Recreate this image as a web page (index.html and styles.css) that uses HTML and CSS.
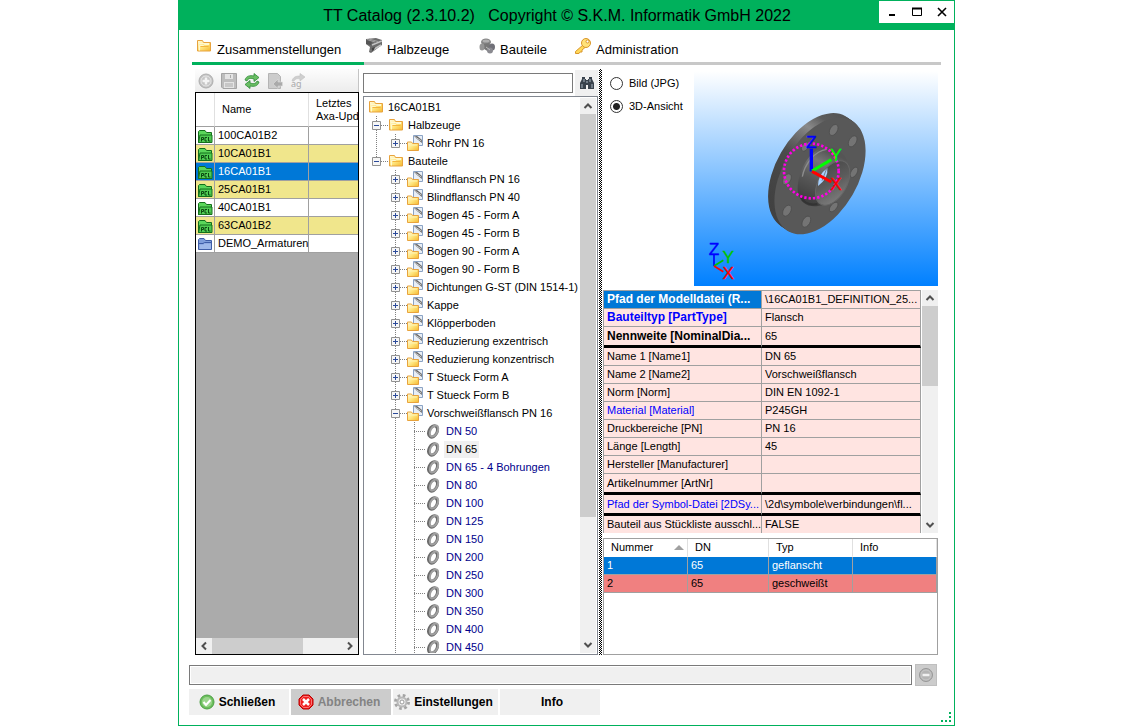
FILE: index.html
```
<!DOCTYPE html>
<html lang="de">
<head>
  <meta charset="UTF-8" />
  <meta name="viewport" content="width=device-width, initial-scale=1.0" />
  <title>TT Catalog</title>
  <link rel="stylesheet" href="styles.css">
</head>
<body>

  <!-- Icons -->
  <svg class="defs" aria-hidden="true">
    <defs>
      <linearGradient id="gold" x1="0" y1="0" x2="1" y2="1">
        <stop offset="0" stop-color="#fffbe0" /><stop offset="0.5" stop-color="#ffe680" /><stop offset="1" stop-color="#f5b82e" />
      </linearGradient>
      <linearGradient id="sky" x1="0" y1="0" x2="0" y2="1">
        <stop offset="0" stop-color="#fff" /><stop offset="1" stop-color="#0080ff" />
      </linearGradient>
      <linearGradient id="rim" x1="0" y1="1" x2="0.6" y2="0">
        <stop offset="0" stop-color="#3a3a3a" /><stop offset="0.4" stop-color="#4c4c4c" /><stop offset="0.62" stop-color="#8a8a8a" /><stop offset="0.75" stop-color="#5c5c5c" /><stop offset="1" stop-color="#505050" />
      </linearGradient>
      <linearGradient id="hub" x1="0" y1="1" x2="0.4" y2="0">
        <stop offset="0" stop-color="#353535" /><stop offset="0.5" stop-color="#585858" /><stop offset="0.8" stop-color="#777" /><stop offset="1" stop-color="#555" />
      </linearGradient>
      <linearGradient id="bore" x1="0" y1="0" x2="1" y2="1">
        <stop offset="0" stop-color="#454545" /><stop offset="0.5" stop-color="#5c5c5c" /><stop offset="1" stop-color="#868686" />
      </linearGradient>
    </defs>
    <symbol id="i-folder" viewBox="0 0 16 16">
      <path d="M1.500 13V2.500h5l1 2h7V13z" fill="url(#gold)" stroke="#e8a33d" />
      <path d="M3 5.500h10M3.500 12.500v-5h4l1-1H13" fill="none" stroke="#fff8d0" />
      <path d="M4.500 8.500h8" stroke="#f3b63f" />
    </symbol>
    <symbol id="i-group" viewBox="0 0 16 16">
      <path d="M6.500 0.500h9v10h-9z" fill="#e8eef6" stroke="#8ba3c4" />
      <path d="M7 1.500l3-.5 5 4v3z" fill="#666" />
      <path d="M8 2l6.500 4" stroke="#ccc" />
      <path d="M.5 15.500V7h4l1 1.500h6v7z" fill="url(#gold)" stroke="#e8a33d" />
      <path d="M2 10h8" stroke="#fff3b0" />
    </symbol>
    <symbol id="i-ring" viewBox="0 0 16 16">
      <ellipse cx="7" cy="8.500" rx="4" ry="6" transform="rotate(28 7 8.500)" fill="none" stroke="#6c6c6c" stroke-width="3" />
      <ellipse cx="8" cy="8" rx="3.500" ry="6" transform="rotate(28 8 8)" fill="none" stroke="#a0a0a0" stroke-width="2" />
    </symbol>
    <symbol id="i-pcl" viewBox="0 0 16 16">
      <path d="M1.500 14.500v-11l1-1H8l1.500 2h5v10z" fill="#5ad65a" stroke="#14701c" />
      <path d="M1.500 14.500l1.500-7.500h12v7.500z" fill="#4fcb52" stroke="#14701c" />
      <path d="M4.500 13.500v-4h2v2h-2M10 9.500H8v3.500h2M11.500 9v4h2" fill="none" stroke="#0c4a12" />
    </symbol>
    <symbol id="i-blue" viewBox="0 0 16 16">
      <path d="M1.500 13.500v-10l1-1H7l1.500 2h6v9z" fill="#7f9ddb" stroke="#3f5da8" />
      <path d="M2 7.500h4l1.500-1H14" fill="none" stroke="#3f5da8" />
      <path d="M2.500 8.500h4l1-1h6.500v5.500h-11.500z" fill="#9fb8ea" />
    </symbol>
    <symbol id="i-profile" viewBox="0 0 16 16">
      <path d="M0 1l10-1 6 2v5L5 15l-2-1 1-5-4-3z" fill="#6c6c6c" />
      <path d="M1 1.500l8 2.500M3 1l9 2.500" stroke="#a0a0a0" />
      <path d="M6 7l10-4M5 13l10-6" stroke="#c4c4c4" stroke-width="1.500" />
      <path d="M0 2l6 2-1 3-5-1z" fill="#555" />
      <path d="M5 14l1-4 3-1-1 3z" fill="#444" />
    </symbol>
    <symbol id="i-parts" viewBox="0 0 16 16">
      <ellipse cx="7" cy="4" rx="5" ry="3.500" fill="#858585" />
      <ellipse cx="7" cy="3" rx="3.500" ry="1.500" fill="#b0b0b0" />
      <path d="M5 6l5-1 3 5-3 4-5-3z" fill="#777" />
      <ellipse cx="3" cy="9" rx="2.500" ry="3.500" fill="#959595" />
      <ellipse cx="13" cy="9" rx="3" ry="3.500" fill="#707078" />
      <ellipse cx="11" cy="12.500" rx="3" ry="3" fill="#8a8a90" />
      <path d="M7 9l4 3" stroke="#bbb" />
    </symbol>
    <symbol id="i-key" viewBox="0 0 16 16">
      <path d="M8 7L.500 13.500v2H4l1-1.500h2V12l3-2.500" fill="#ffd95a" stroke="#d9962a" />
      <circle cx="11" cy="5" r="4.500" fill="#ffe27a" stroke="#d9962a" />
      <circle cx="12.500" cy="3.500" r="1.500" fill="#fff" stroke="#d9962a" />
    </symbol>
    <symbol id="i-add" viewBox="0 0 16 16">
      <circle cx="8" cy="8" r="7" fill="#c4c4c4" stroke="#adadad" />
      <circle cx="8" cy="8" r="5" fill="none" stroke="#e6e6e6" />
      <path d="M8 4.500v7M4.500 8h7" stroke="#f4f4f4" stroke-width="2.500" />
    </symbol>
    <symbol id="i-save" viewBox="0 0 16 16">
      <path d="M.5.5h15v15H2l-1.500-1.500z" fill="#bdbdbd" stroke="#a4a4a4" />
      <path d="M4 1h8v5H4zM3 9h10v6H3z" fill="#e4e4e4" />
      <path d="M4 11h8M4 13h8M9.500 2v3" stroke="#aaa" />
    </symbol>
    <symbol id="i-refresh" viewBox="0 0 16 16">
      <path d="M1 7c1-4 5-5 9-4V0.500l5 4-5 4V6C7 5 4 5 3 8z" fill="#69bd62" stroke="#2f8a39" stroke-width=".8" />
      <path d="M15 9c-1 4-5 5-9 4v2.500l-5-4 5-4V10c3 1 6 1 7-2z" fill="#69bd62" stroke="#2f8a39" stroke-width=".8" />
    </symbol>
    <symbol id="i-import" viewBox="0 0 16 16">
      <path d="M1.500.5h9l3 3v12h-12z" fill="#ccc" stroke="#b4b4b4" />
      <path d="M15.500 9H11V6l-5 5 5 4.500V13h4.500z" fill="#aaa" stroke="#ddd" stroke-width=".6" />
    </symbol>
    <symbol id="i-rename" viewBox="0 0 16 16">
      <path d="M2 8c1-4 4-5 8-5V.500L15 4l-5 4V6C7 5 5 6 4 8z" fill="#cfcfcf" stroke="#c0c0c0" stroke-width=".6" />
      <text x="1" y="14" font-family="Noto Sans" font-size="9" fill="#a8a8a8">ag</text>
    </symbol>
    <symbol id="i-search" viewBox="0 0 16 16">
      <path d="M3 2h3v2h1v1h2V4h1V2h3v2l2 4v6H9v-4H7v4H1V8l2-4z" fill="#39424c" />
      <path d="M3 9v4M5 4v3M11 4v3M13 9v4M8 6v2" stroke="#aab6c2" />
    </symbol>
    <symbol id="i-ok" viewBox="0 0 16 16">
      <circle cx="8" cy="8" r="7" fill="#6cbf5d" stroke="#4da044" />
      <circle cx="8" cy="8" r="5" fill="#9bd58d" />
      <path d="M4.500 8l2.500 3 4.500-5" fill="none" stroke="#fff" stroke-width="2" />
    </symbol>
    <symbol id="i-cancel" viewBox="0 0 16 16">
      <path d="M5 1h6l4 4v6l-4 4H5l-4-4V5z" fill="#f02020" stroke="#b80000" />
      <path d="M5.500 2.500h5l3 3v5l-3 3h-5l-3-3v-5z" fill="none" stroke="#ff9a9a" stroke-width=".7" />
      <path d="M5 5l6 6M11 5l-6 6" stroke="#fff" stroke-width="2.500" />
    </symbol>
    <symbol id="i-gear" viewBox="0 0 16 16">
      <circle cx="8" cy="8" r="6.500" fill="none" stroke="#a4a4a4" stroke-width="3" stroke-dasharray="2.600 2.500" />
      <circle cx="8" cy="8" r="4.500" fill="#ececec" stroke="#b8b8b8" stroke-width="2" />
      <circle cx="8" cy="8" r="2" fill="#fff" stroke="#999" />
    </symbol>
    <symbol id="i-minus" viewBox="0 0 16 16">
      <circle cx="8" cy="8" r="6.500" fill="#b4b4b4" stroke="#989898" />
      <circle cx="8" cy="8" r="5" fill="none" stroke="#c8c8c8" />
      <path d="M4.500 8h7" stroke="#f0f0f0" stroke-width="2.500" />
    </symbol>
    <symbol id="i-plus-box" viewBox="0 0 9 9">
      <path d="M.5.5h8v8h-8z" fill="#f6f6f6" stroke="#919191" />
      <path d="M2 4.500h5M4.500 2v5" stroke="#2b4a9a" />
    </symbol>
    <symbol id="i-minus-box" viewBox="0 0 9 9">
      <path d="M.5.5h8v8h-8z" fill="#f6f6f6" stroke="#919191" />
      <path d="M2 4.500h5" stroke="#2b4a9a" />
    </symbol>
    <symbol id="i-up" viewBox="0 0 16 16"><path d="M4.500 10L8 6.500l3.500 3.500" fill="none" stroke="#505050" stroke-width="2" /></symbol>
    <symbol id="i-down" viewBox="0 0 16 16"><path d="M4.500 6L8 9.500 11.500 6" fill="none" stroke="#505050" stroke-width="2" /></symbol>
    <symbol id="i-left" viewBox="0 0 16 16"><path d="M10 4.500L6.500 8l3.500 3.500" fill="none" stroke="#505050" stroke-width="2" /></symbol>
    <symbol id="i-right" viewBox="0 0 16 16"><path d="M6 4.500L9.500 8 6 11.500" fill="none" stroke="#505050" stroke-width="2" /></symbol>
  </svg>

  <div class="window">
    <header class="titlebar">
      <h1>TT Catalog (2.3.10.2)   Copyright © S.K.M. Informatik GmbH 2022</h1>
      <div class="window-buttons">
        <button aria-label="Minimieren"><svg viewBox="0 0 12 12"><path d="M3 9h6" stroke="#000" stroke-width="2" /></svg></button>
        <button aria-label="Maximieren"><svg viewBox="0 0 12 12"><path d="M1.500 2.500h9v7h-9z" fill="none" stroke="#000" /><path d="M1 2.500h10" stroke="#000" stroke-width="2" /></svg></button>
        <button aria-label="Fenster schließen"><svg viewBox="0 0 12 12"><path d="M2 2l8 8M10 2l-8 8" stroke="#000" stroke-width="1.600" /></svg></button>
      </div>
    </header>

    <nav class="tabs">
      <a href="#" class="tab tab-sets active"><svg class="icon"><use href="#i-folder" /></svg><span>Zusammenstellungen</span></a>
      <a href="#" class="tab tab-profiles"><svg class="icon"><use href="#i-profile" /></svg><span>Halbzeuge</span></a>
      <a href="#" class="tab tab-parts"><svg class="icon"><use href="#i-parts" /></svg><span>Bauteile</span></a>
      <a href="#" class="tab"><svg class="icon"><use href="#i-key" /></svg><span>Administration</span></a>
    </nav>

    <main>
      <section class="sets">
        <div class="toolbar">
          <button aria-label="Neu"><svg class="icon"><use href="#i-add" /></svg></button>
          <button aria-label="Speichern"><svg class="icon"><use href="#i-save" /></svg></button>
          <button aria-label="Aktualisieren"><svg class="icon"><use href="#i-refresh" /></svg></button>
          <button aria-label="Importieren"><svg class="icon"><use href="#i-import" /></svg></button>
          <button aria-label="Umbenennen"><svg class="icon"><use href="#i-rename" /></svg></button>
        </div>
        <div class="sets-box">
          <div class="sets-scroll">
            <table class="sets-table">
              <thead>
                <tr><th class="col-icon"></th><th class="col-name">Name</th><th class="col-update">Letztes<br>Axa-Upda</th></tr>
              </thead>
              <tbody>
                <tr><td><svg class="icon"><use href="#i-pcl" /></svg></td><td>100CA01B2</td><td></td></tr>
                <tr class="alt"><td><svg class="icon"><use href="#i-pcl" /></svg></td><td>10CA01B1</td><td></td></tr>
                <tr class="selected"><td><svg class="icon"><use href="#i-pcl" /></svg></td><td>16CA01B1</td><td></td></tr>
                <tr class="alt"><td><svg class="icon"><use href="#i-pcl" /></svg></td><td>25CA01B1</td><td></td></tr>
                <tr><td><svg class="icon"><use href="#i-pcl" /></svg></td><td>40CA01B1</td><td></td></tr>
                <tr class="alt"><td><svg class="icon"><use href="#i-pcl" /></svg></td><td>63CA01B2</td><td></td></tr>
                <tr><td><svg class="icon"><use href="#i-blue" /></svg></td><td>DEMO_Armaturen</td><td></td></tr>
              </tbody>
            </table>
          </div>
          <div class="scroll scroll-h">
            <button aria-label="Nach links"><svg class="icon"><use href="#i-left" /></svg></button>
            <div class="track"><div class="thumb"></div></div>
            <button aria-label="Nach rechts"><svg class="icon"><use href="#i-right" /></svg></button>
          </div>
        </div>
      </section>

      <section class="browser">
        <div class="search">
          <input type="text" aria-label="Suche" />
          <button aria-label="Suchen"><svg class="icon"><use href="#i-search" /></svg></button>
        </div>
        <div class="tree-box">
          <div class="tree">
            <div class="root"><svg class="icon"><use href="#i-folder" /></svg><span>16CA01B1</span></div>
            <ul class="first">
              <li>
                <div class="node"><button aria-label="Zuklappen"><svg><use href="#i-minus-box" /></svg></button><svg class="icon"><use href="#i-folder" /></svg><span>Halbzeuge</span></div>
                <ul>
                  <li class="end"><div class="node"><button aria-label="Aufklappen"><svg><use href="#i-plus-box" /></svg></button><svg class="icon"><use href="#i-group" /></svg><span>Rohr PN 16</span></div></li>
                </ul>
              </li>
              <li class="end">
                <div class="node"><button aria-label="Zuklappen"><svg><use href="#i-minus-box" /></svg></button><svg class="icon"><use href="#i-folder" /></svg><span>Bauteile</span></div>
                <ul>
                  <li><div class="node"><button aria-label="Aufklappen"><svg><use href="#i-plus-box" /></svg></button><svg class="icon"><use href="#i-group" /></svg><span>Blindflansch PN 16</span></div></li>
                  <li><div class="node"><button aria-label="Aufklappen"><svg><use href="#i-plus-box" /></svg></button><svg class="icon"><use href="#i-group" /></svg><span>Blindflansch PN 40</span></div></li>
                  <li><div class="node"><button aria-label="Aufklappen"><svg><use href="#i-plus-box" /></svg></button><svg class="icon"><use href="#i-group" /></svg><span>Bogen 45 - Form A</span></div></li>
                  <li><div class="node"><button aria-label="Aufklappen"><svg><use href="#i-plus-box" /></svg></button><svg class="icon"><use href="#i-group" /></svg><span>Bogen 45 - Form B</span></div></li>
                  <li><div class="node"><button aria-label="Aufklappen"><svg><use href="#i-plus-box" /></svg></button><svg class="icon"><use href="#i-group" /></svg><span>Bogen 90 - Form A</span></div></li>
                  <li><div class="node"><button aria-label="Aufklappen"><svg><use href="#i-plus-box" /></svg></button><svg class="icon"><use href="#i-group" /></svg><span>Bogen 90 - Form B</span></div></li>
                  <li><div class="node"><button aria-label="Aufklappen"><svg><use href="#i-plus-box" /></svg></button><svg class="icon"><use href="#i-group" /></svg><span>Dichtungen G-ST (DIN 1514-1)</span></div></li>
                  <li><div class="node"><button aria-label="Aufklappen"><svg><use href="#i-plus-box" /></svg></button><svg class="icon"><use href="#i-group" /></svg><span>Kappe</span></div></li>
                  <li><div class="node"><button aria-label="Aufklappen"><svg><use href="#i-plus-box" /></svg></button><svg class="icon"><use href="#i-group" /></svg><span>Klöpperboden</span></div></li>
                  <li><div class="node"><button aria-label="Aufklappen"><svg><use href="#i-plus-box" /></svg></button><svg class="icon"><use href="#i-group" /></svg><span>Reduzierung exzentrisch</span></div></li>
                  <li><div class="node"><button aria-label="Aufklappen"><svg><use href="#i-plus-box" /></svg></button><svg class="icon"><use href="#i-group" /></svg><span>Reduzierung konzentrisch</span></div></li>
                  <li><div class="node"><button aria-label="Aufklappen"><svg><use href="#i-plus-box" /></svg></button><svg class="icon"><use href="#i-group" /></svg><span>T Stueck Form A</span></div></li>
                  <li><div class="node"><button aria-label="Aufklappen"><svg><use href="#i-plus-box" /></svg></button><svg class="icon"><use href="#i-group" /></svg><span>T Stueck Form B</span></div></li>
                  <li>
                    <div class="node"><button aria-label="Zuklappen"><svg><use href="#i-minus-box" /></svg></button><svg class="icon"><use href="#i-group" /></svg><span>Vorschweißflansch PN 16</span></div>
                    <ul class="sizes">
                      <li><div class="node"><svg class="icon"><use href="#i-ring" /></svg><span>DN 50</span></div></li>
                      <li><div class="node current"><svg class="icon"><use href="#i-ring" /></svg><span>DN 65</span></div></li>
                      <li><div class="node"><svg class="icon"><use href="#i-ring" /></svg><span>DN 65 - 4 Bohrungen</span></div></li>
                      <li><div class="node"><svg class="icon"><use href="#i-ring" /></svg><span>DN 80</span></div></li>
                      <li><div class="node"><svg class="icon"><use href="#i-ring" /></svg><span>DN 100</span></div></li>
                      <li><div class="node"><svg class="icon"><use href="#i-ring" /></svg><span>DN 125</span></div></li>
                      <li><div class="node"><svg class="icon"><use href="#i-ring" /></svg><span>DN 150</span></div></li>
                      <li><div class="node"><svg class="icon"><use href="#i-ring" /></svg><span>DN 200</span></div></li>
                      <li><div class="node"><svg class="icon"><use href="#i-ring" /></svg><span>DN 250</span></div></li>
                      <li><div class="node"><svg class="icon"><use href="#i-ring" /></svg><span>DN 300</span></div></li>
                      <li><div class="node"><svg class="icon"><use href="#i-ring" /></svg><span>DN 350</span></div></li>
                      <li><div class="node"><svg class="icon"><use href="#i-ring" /></svg><span>DN 400</span></div></li>
                      <li><div class="node"><svg class="icon"><use href="#i-ring" /></svg><span>DN 450</span></div></li>
                    </ul>
                  </li>
                </ul>
              </li>
            </ul>
          </div>
          <div class="scroll scroll-v tree-scroll">
            <button aria-label="Nach oben"><svg class="icon"><use href="#i-up" /></svg></button>
            <div class="track"><div class="thumb"></div></div>
            <button aria-label="Nach unten"><svg class="icon"><use href="#i-down" /></svg></button>
          </div>
        </div>
      </section>

      <div class="splitter"></div>

      <section class="details">
        <div class="preview">
          <div class="view-mode">
            <label><input type="radio" name="view" />Bild (JPG)</label>
            <label><input type="radio" name="view" checked />3D-Ansicht</label>
          </div>
          <svg class="scene" viewBox="12 3 732 645" preserveAspectRatio="none" role="img" aria-label="3D-Ansicht Flansch">
            <rect x="12" y="3" width="732" height="645" fill="url(#sky)" />
            <!-- flange disc: rim, then face -->
            <g fill="url(#rim)">
              <ellipse cx="371" cy="304" rx="113" ry="191" transform="rotate(30 371 304)" />
              <ellipse cx="376" cy="308" rx="113" ry="191" transform="rotate(30 376 308)" />
              <ellipse cx="381" cy="311" rx="113" ry="191" transform="rotate(30 381 311)" />
              <ellipse cx="386" cy="315" rx="113" ry="191" transform="rotate(30 386 315)" />
            </g>
            <ellipse cx="390" cy="318" rx="113" ry="191" transform="rotate(30 390 318)" fill="#585858" />
            <!-- bolt holes -->
            <g fill="#747474" stroke="#4a4a4a" stroke-width="2">
              <ellipse cx="431" cy="180" rx="11" ry="18" transform="rotate(30 431 180)" />
              <ellipse cx="488" cy="214" rx="11" ry="18" transform="rotate(30 488 214)" />
              <ellipse cx="492" cy="307" rx="9" ry="17" transform="rotate(30 492 307)" />
              <ellipse cx="431" cy="411" rx="9" ry="17" transform="rotate(40 431 411)" />
              <ellipse cx="349" cy="455" rx="11" ry="18" transform="rotate(30 349 455)" />
              <ellipse cx="291" cy="422" rx="11" ry="18" transform="rotate(30 291 422)" />
              <ellipse cx="291" cy="328" rx="11" ry="18" transform="rotate(30 291 328)" />
              <ellipse cx="345" cy="230" rx="9" ry="15" transform="rotate(30 345 230)" />
            </g>
            <!-- welding neck -->
            <path d="M400 232C350 245 318 320 324 368c6 30 28 44 60 40l50-10 42-90-4-35c-14-30-40-50-72-41z" fill="url(#hub)" />
            <path d="M410 238c-35 4-66 44-73 82" fill="none" stroke="#8c8c8c" stroke-width="4" />
            <path d="M332 380c10 20 28 26 50 22" fill="none" stroke="#333" stroke-width="6" />
            <ellipse cx="428" cy="339" rx="42" ry="73" transform="rotate(30 428 339)" fill="url(#bore)" stroke="#666" stroke-width="3" />
            <path d="M412 294q4 30-28 54 0-34 28-54z" fill="#a8d2ff" />
            <path d="M410 296l-14 36" stroke="#555" stroke-width="2" />
            <circle cx="364" cy="303" r="82" fill="none" stroke="#ff00e6" stroke-width="8" stroke-dasharray="7 6" />
            <!-- axes -->
            <path d="M364 304V236" stroke="#00f" stroke-width="10" />
            <path d="M366 303l58-34" stroke="#0f0" stroke-width="9" />
            <path d="M366 304l58 32" stroke="#f00" stroke-width="9" />
            <g font-family="Liberation Sans" font-size="52" text-anchor="middle">
              <text x="364" y="233" fill="#00f" stroke="#00f">Z</text>
              <text x="438" y="274" fill="#0f0" stroke="#0f0">Y</text>
              <text x="438" y="360" fill="#f00" stroke="#f00">X</text>
              <text x="72" y="554" fill="#00f" stroke="#00f">Z</text>
              <text x="115" y="578" fill="#00c400" stroke="#00c400">Y</text>
              <text x="115" y="627" fill="#f00" stroke="#f00">X</text>
            </g>
            <path d="M72 588v-34" stroke="#00f" stroke-width="5" />
            <path d="M72 588l28-17" stroke="#00c400" stroke-width="5" />
            <path d="M72 588l28 17" stroke="#f00" stroke-width="5" />
          </svg>
        </div>

        <div class="props">
          <div class="props-view">
            <table class="props-table">
              <tbody>
                <tr class="key"><th class="selected">Pfad der Modelldatei (R...</th><td>\16CA01B1_DEFINITION_25...</td></tr>
                <tr class="key link"><th>Bauteiltyp [PartType]</th><td>Flansch</td></tr>
                <tr class="key rule"><th>Nennweite [NominalDia...</th><td>65</td></tr>
                <tr><th>Name 1 [Name1]</th><td>DN 65</td></tr>
                <tr><th>Name 2 [Name2]</th><td>Vorschweißflansch</td></tr>
                <tr><th>Norm [Norm]</th><td>DIN EN 1092-1</td></tr>
                <tr class="link"><th>Material [Material]</th><td>P245GH</td></tr>
                <tr><th>Druckbereiche [PN]</th><td>PN 16</td></tr>
                <tr><th>Länge [Length]</th><td>45</td></tr>
                <tr><th>Hersteller [Manufacturer]</th><td></td></tr>
                <tr class="rule"><th>Artikelnummer [ArtNr]</th><td></td></tr>
                <tr class="link rule"><th>Pfad der Symbol-Datei [2DSy...</th><td>\2d\symbole\verbindungen\fl...</td></tr>
                <tr><th>Bauteil aus Stückliste ausschl...</th><td>FALSE</td></tr>
              </tbody>
            </table>
          </div>
          <div class="scroll scroll-v props-scroll">
            <button aria-label="Nach oben"><svg class="icon"><use href="#i-up" /></svg></button>
            <div class="track"><div class="thumb"></div></div>
            <button aria-label="Nach unten"><svg class="icon"><use href="#i-down" /></svg></button>
          </div>
        </div>

        <div class="ports">
          <table class="ports-table">
            <thead>
              <tr><th class="col-number"><div class="sorted">Nummer<svg viewBox="0 0 10 5"><path d="M0 5l5-5 5 5z" fill="#a0a0a0" /></svg></div></th><th class="col-dn">DN</th><th class="col-type">Typ</th><th>Info</th></tr>
            </thead>
            <tbody>
              <tr class="selected"><td>1</td><td>65</td><td>geflanscht</td><td></td></tr>
              <tr class="welded"><td>2</td><td>65</td><td>geschweißt</td><td></td></tr>
            </tbody>
          </table>
        </div>
      </section>
    </main>

    <footer>
      <div class="status">
        <div class="progress"></div>
        <button class="stop" aria-label="Stopp"><svg class="icon"><use href="#i-minus" /></svg></button>
      </div>
      <div class="actions">
        <button><svg class="icon"><use href="#i-ok" /></svg>Schließen</button>
        <button class="cancel"><svg class="icon"><use href="#i-cancel" /></svg>Abbrechen</button>
        <button class="settings"><svg class="icon"><use href="#i-gear" /></svg>Einstellungen</button>
        <button class="info">Info</button>
        <svg class="grip" viewBox="0 0 10 10" aria-hidden="true"><path d="M8 0h2v2H8zM8 4h2v2H8zM8 8h2v2H8zM4 8h2v2H4zM0 8h2v2H0z" fill="#00b15c" /></svg>
      </div>
    </footer>
  </div>

</body>
</html>
```
FILE: styles.css
```
* {
  box-sizing: border-box;
}

body {
  font-family: "Liberation Sans", Arial, sans-serif;
  font-size: 11px;
  line-height: 17px;
  margin: 0;
  padding: 0 179px 0 178px;
  background: #fff;
  color: #000;
}

button {
  font: inherit;
  color: inherit;
  border: none;
  padding: 0;
  background: none;
  cursor: pointer;
}

/* must stay rendered, gradients do not work from display: none */
.defs {
  position: absolute;
  width: 0;
  height: 0;
}

.icon {
  display: block;
  width: 16px;
  height: 16px;
  flex: none;
}

.window {
  display: flex;
  flex-direction: column;
  height: 100vh;
  border: 1px solid #00b15c;
  border-top: none;
}

/* Title bar */
.titlebar {
  display: flex;
  align-items: flex-start;
  height: 30px;
  flex: none;
  background: #00b15c;
}

h1 {
  flex: 1;
  margin: 0;
  padding-left: 56px;
  font-size: 16px;
  font-weight: normal;
  line-height: 31px;
  text-align: center;
  white-space: pre;
}

.window-buttons {
  display: flex;
  margin-top: 1px;
  background: #fff;
}
.window-buttons button {
  width: 25px;
  height: 22px;
  display: flex;
  align-items: center;
  justify-content: center;
}
.window-buttons svg {
  width: 12px;
  height: 12px;
}

/* Tabs */
.tabs {
  display: flex;
  flex: none;
  height: 35px;
  margin: 0 13px;
  border-bottom: 3px solid #c8c8c8;
}
.tab {
  display: flex;
  align-items: flex-start;
  gap: 5px;
  height: 35px;
  padding: 8px 0 0 2px;
  font-size: 13px;
  color: #000;
  text-decoration: none;
}
.tab span {
  padding-top: 3px;
}
.tab-sets {
  width: 172px;
  padding-left: 4px;
}
.tab-profiles {
  width: 113px;
}
.tab-parts {
  width: 96px;
}
.tab.active {
  border-bottom: 3px solid #00b15c;
}

main {
  display: flex;
  flex: 1;
  min-height: 0;
  padding: 4px 16px 0 16px;
}

/* Scroll bars */
.scroll {
  display: flex;
  flex: none;
  background: #f0f0f0;
}
.scroll-v {
  flex-direction: column;
  width: 16px;
}
.scroll-h {
  height: 16px;
}
.scroll .track {
  flex: 1;
}
.scroll .thumb {
  background: #cdcdcd;
}
.scroll-h .thumb {
  width: 70%;
  height: 100%;
}
.tree-scroll .thumb {
  height: 77%;
}
.props-scroll .thumb {
  height: 38%;
}

/* Left: list of sets */
.sets {
  display: flex;
  flex-direction: column;
  width: 164px;
  margin-right: 4px;
}
.toolbar {
  display: flex;
  gap: 7px;
  height: 23px;
  padding: 2px 3px;
  flex: none;
  background: linear-gradient(#fdfdfd, #ececec);
  border-right: 1px solid #c4c4c4;
}
.sets-box {
  display: flex;
  flex-direction: column;
  flex: 1;
  min-height: 0;
  border: 1px solid #000;
}
.sets-scroll {
  flex: 1;
  overflow: hidden;
  background: #ababab;
}
.sets-table {
  width: 186px;
  table-layout: fixed;
  border-collapse: separate;
  border-spacing: 0;
  background: #fff;
}
.sets-table th,
.sets-table td {
  padding: 0;
  border-right: 1px solid #a0a0a0;
  border-bottom: 1px solid #a0a0a0;
  font-weight: normal;
  text-align: left;
  white-space: nowrap;
}
.sets-table th {
  height: 34px;
  padding-left: 7px;
  line-height: 13px;
  border-right-color: #e0e0e0;
}
.sets-table td {
  height: 18px;
  padding-left: 3px;
}
.sets-table td:first-child {
  padding-left: 1px;
}
.sets-table .col-icon {
  width: 19px;
}
.sets-table .col-name {
  width: 94px;
}
.sets-table .alt {
  background: #f0e68c;
}

.selected {
  background: #0078d7;
  color: #fff;
}

/* Middle: search and tree */
.browser {
  display: flex;
  flex-direction: column;
  width: 235px;
}
.search {
  display: flex;
  flex: none;
  align-items: center;
  gap: 2px;
  height: 27px;
}
.search input {
  flex: 1;
  min-width: 0;
  height: 20px;
  padding: 0 3px;
  border: 1px solid #7a7a7a;
  font: inherit;
}
.search button {
  display: flex;
  align-items: center;
  justify-content: center;
  width: 23px;
  height: 26px;
  background: #f0f0f0;
}
.tree-box {
  display: flex;
  flex: 1;
  min-height: 0;
  padding: 1px;
  border: 1px solid #828790;
}
.tree {
  flex: 1;
  overflow: hidden;
}
.tree ul {
  list-style: none;
  margin: 0 0 0 19px;
  padding: 0;
}
.tree .first {
  margin-left: 11px;
}
/* dotted guide down the left edge of each branch */
.tree li {
  background: repeating-linear-gradient(#808080 0 1px, transparent 1px 2px) 0 0 / 1px 100% no-repeat;
}
.tree li.end {
  background-size: 1px 9px;
}
.root,
.node {
  display: flex;
  align-items: center;
  height: 18px;
  white-space: nowrap;
}
.root {
  padding-left: 3px;
}
.node::before {
  content: "";
  order: 1;
  width: 7px;
  height: 1px;
  background: repeating-linear-gradient(90deg, #808080 0 1px, transparent 1px 2px);
}
.node .icon,
.node span {
  order: 2;
}
.root span,
.node span {
  padding: 0 2px;
  margin-left: 2px;
}
.node button {
  width: 9px;
  height: 9px;
  margin-left: -4px;
}
.node button svg {
  display: block;
  width: 9px;
  height: 9px;
}
.sizes {
  color: #00008b;
}
.sizes .node::before {
  width: 12px;
}
.sizes .current span {
  background: #f0f0f0;
  color: #000;
}

.splitter {
  width: 3px;
  margin: 0 1px;
  background: repeating-conic-gradient(#000 0 25%, #fff 0 50%) 0 0 / 2px 2px;
}

/* Right: preview, properties, connections */
.details {
  display: flex;
  flex-direction: column;
  flex: 1;
  min-width: 0;
}
.preview {
  display: flex;
  flex: none;
  height: 221px;
}
.view-mode {
  display: flex;
  flex-direction: column;
  gap: 6px;
  flex: none;
  width: 91px;
  padding: 6px 0 0 7px;
}
.view-mode label {
  display: flex;
  align-items: center;
  gap: 6px;
}
.view-mode input {
  appearance: none;
  width: 13px;
  height: 13px;
  margin: 0;
  border: 1px solid #333;
  border-radius: 50%;
  background: #fff;
}
.view-mode input:checked {
  background: radial-gradient(circle, #222 0 3px, #fff 4px);
}
.scene {
  flex: 1;
  min-width: 0;
  height: 215px;
  margin-top: 2px;
}

.props {
  display: flex;
  flex: none;
  height: 243px;
}
.props-view {
  flex: 1;
  min-width: 0;
  margin-right: 1px;
  overflow: hidden;
}
.props-table {
  width: 100%;
  table-layout: fixed;
  border-collapse: separate;
  border-spacing: 0;
  border: 1px solid #a0a0a0;
  border-right: none;
  background: #ffe4e1;
}
.props-table th,
.props-table td {
  height: 18px;
  padding: 0 3px;
  border-right: 1px solid #a0a0a0;
  border-bottom: 1px solid #a0a0a0;
  font-weight: normal;
  text-align: left;
  white-space: nowrap;
}
.props-table th {
  width: 158px;
}
.props-table .key th {
  font-size: 12px;
  font-weight: bold;
}
.props-table .link th {
  color: #00f;
}
.props-table .rule th,
.props-table .rule td {
  height: 21px;
  border-bottom: 3px solid #000;
}

.ports {
  flex: 1;
  min-height: 0;
  margin-top: 5px;
  border: 1px solid #a0a0a0;
}
.ports-table {
  width: 100%;
  table-layout: fixed;
  border-collapse: separate;
  border-spacing: 0;
}
.ports-table th,
.ports-table td {
  height: 18px;
  padding: 0 3px;
  border-right: 1px solid #a0a0a0;
  border-bottom: 1px solid #a0a0a0;
  font-weight: normal;
  text-align: left;
}
.ports-table th {
  padding-left: 7px;
  border-right-color: #e0e0e0;
  border-bottom-color: #fff;
}
.ports-table .col-number,
.ports-table .col-type {
  width: 84px;
}
.ports-table .col-dn {
  width: 81px;
}
.sorted {
  display: flex;
  align-items: center;
  justify-content: space-between;
}
.sorted svg {
  width: 10px;
  height: 5px;
}
.welded {
  background: #f08080;
}

/* Footer */
footer {
  flex: none;
  padding: 9px 3px 0 10px;
}
.status {
  display: flex;
  gap: 3px;
  padding-right: 14px;
}
.progress {
  flex: 1;
  height: 20px;
  margin-top: 1px;
  border: 1px solid #7a7a7a;
  background: #f0f0f0;
  box-shadow: inset 0 0 0 1px #fff;
}
.stop {
  display: flex;
  align-items: center;
  justify-content: center;
  width: 22px;
  height: 22px;
  border: 1px solid #bfbfbf;
  background: #ccc;
}
.actions {
  display: flex;
  gap: 2px;
  height: 39px;
  padding-top: 3px;
}
.actions button {
  display: flex;
  align-items: center;
  justify-content: center;
  gap: 4px;
  width: 100px;
  height: 26px;
  padding-right: 4px;
  background: #f0f0f0;
  font-size: 12px;
  font-weight: bold;
}
.actions button.cancel {
  background: #ccc;
  color: #838383;
}
.actions button.settings {
  width: 105px;
}
.actions button.info {
  padding: 0 0 0 4px;
}
.grip {
  width: 10px;
  height: 10px;
  margin: auto 0 3px auto;
}
```
